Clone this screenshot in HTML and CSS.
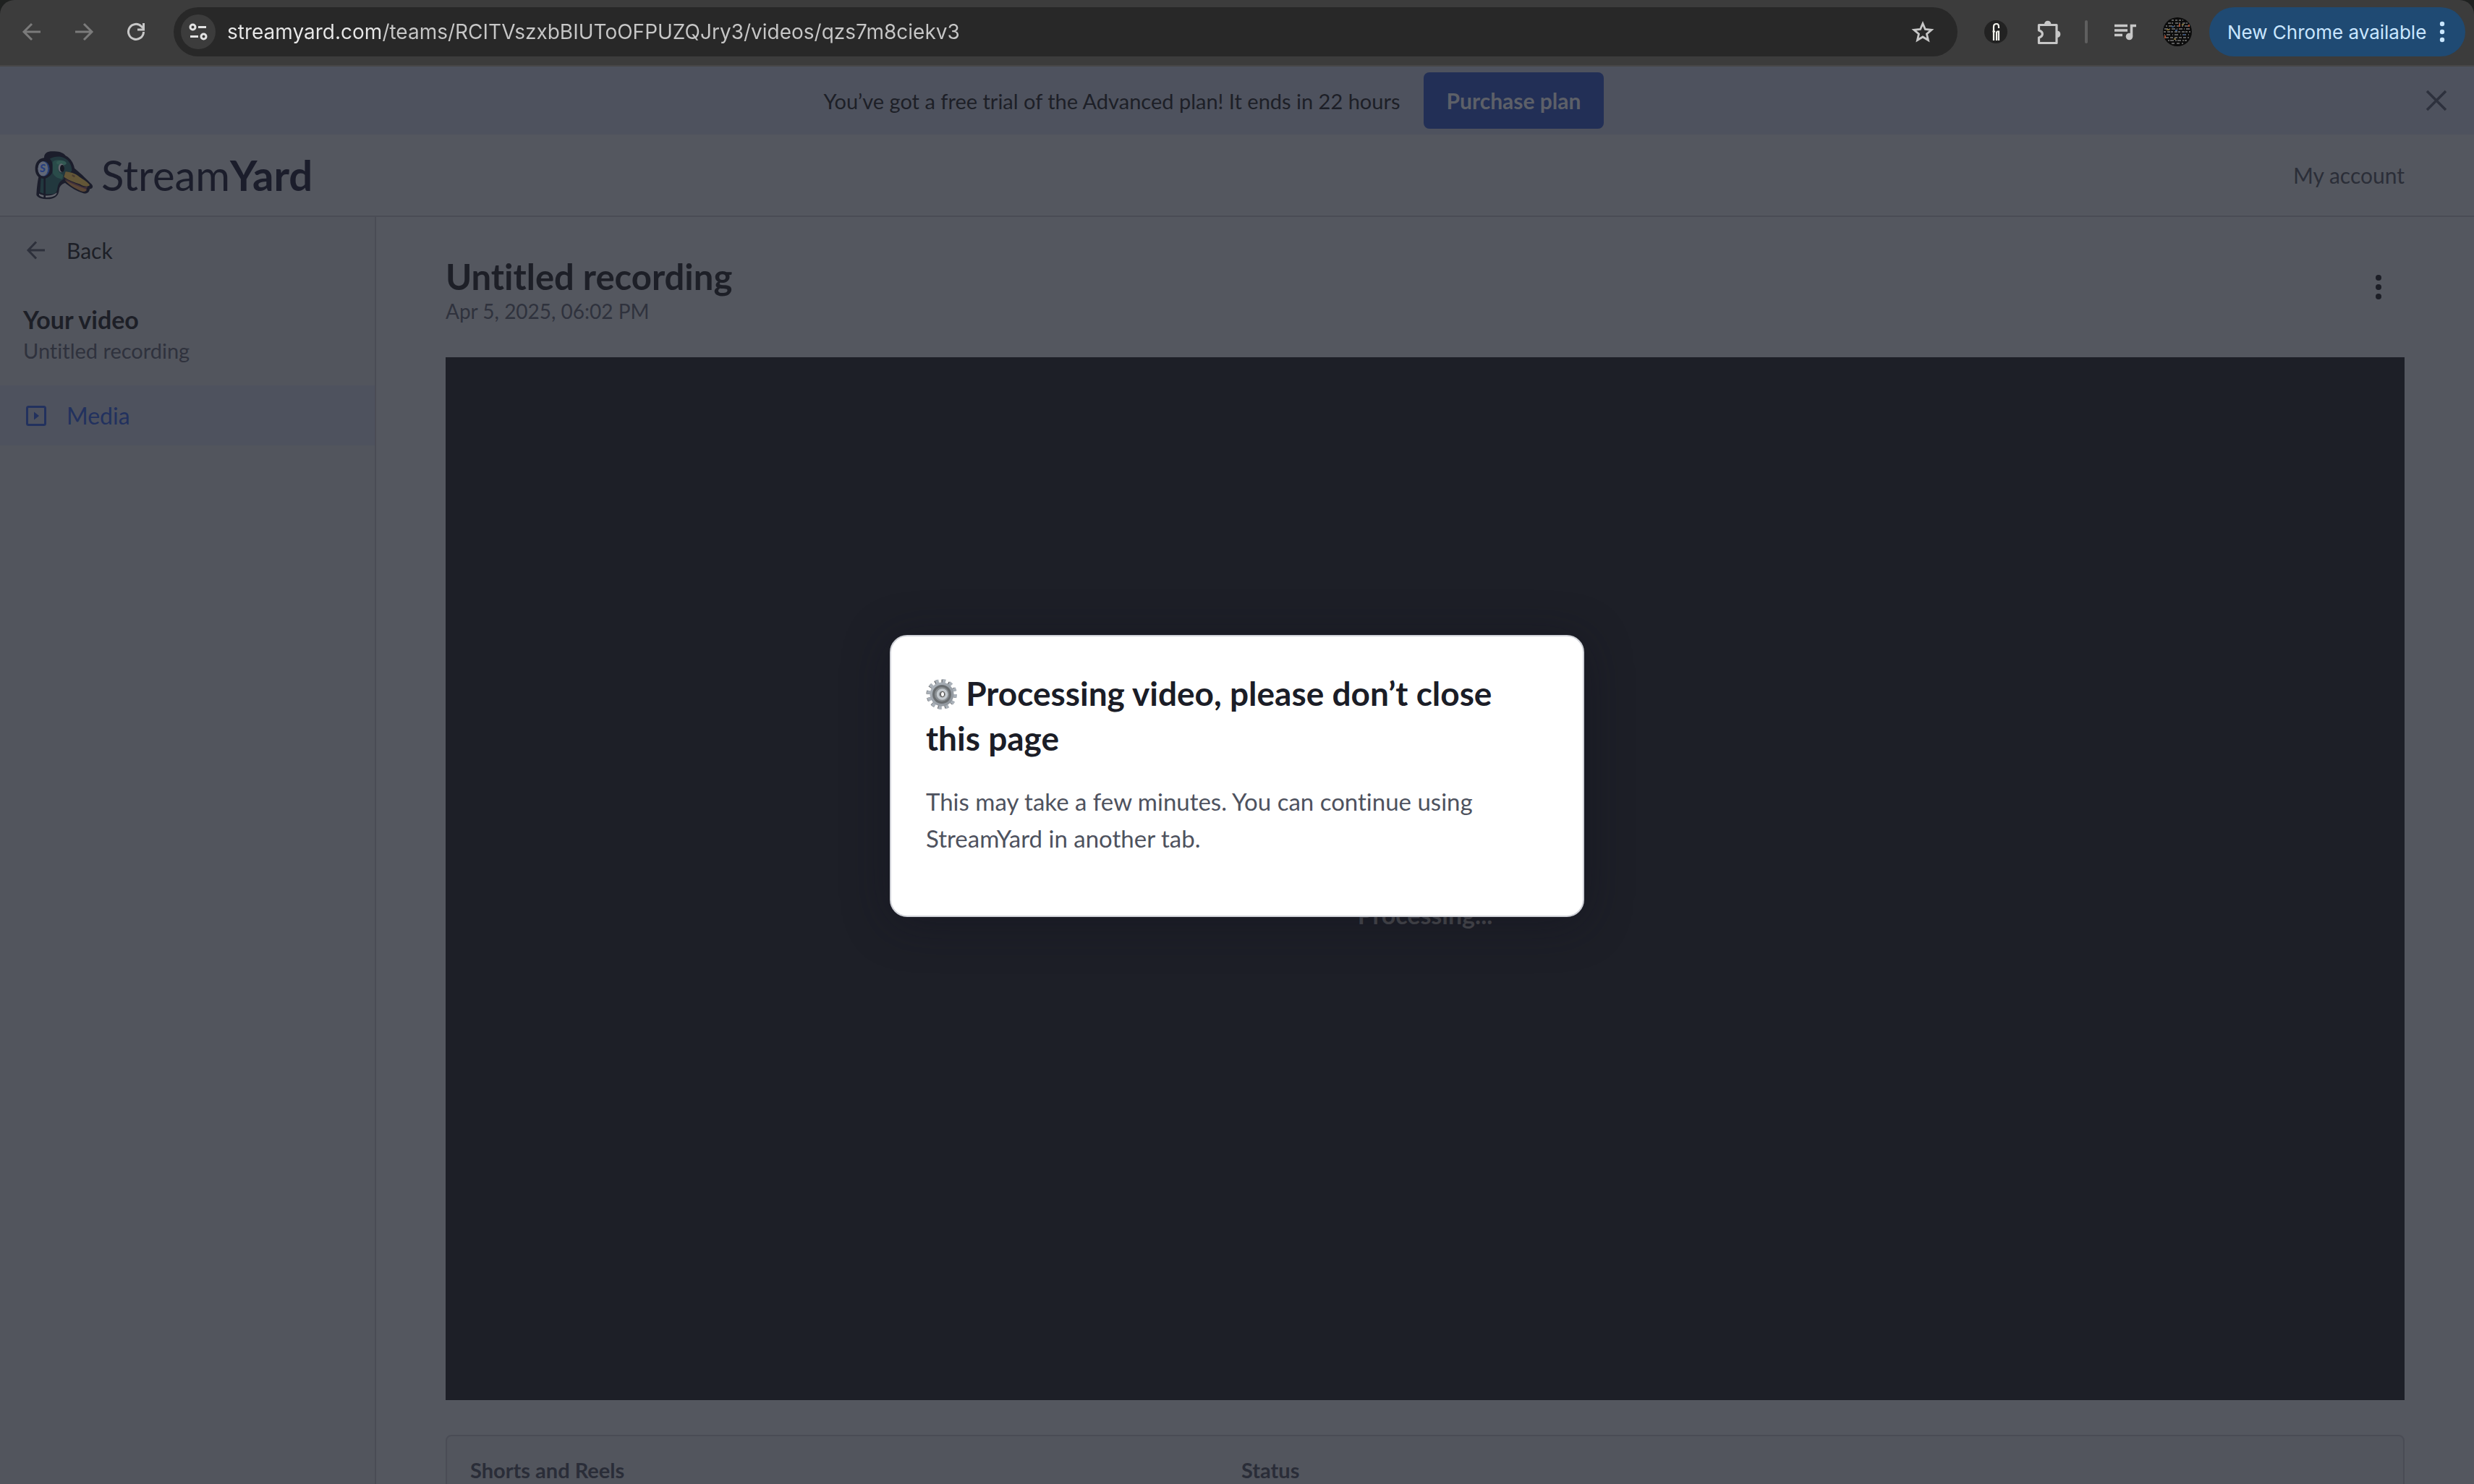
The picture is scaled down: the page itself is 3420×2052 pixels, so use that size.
FILE: index.html
```html
<!DOCTYPE html>
<html lang="en">
<head>
<meta charset="utf-8">
<title>Untitled recording - StreamYard</title>
<link rel="stylesheet" href="styles.css">
</head>
<body>
<header class="toolbar">
  <nav class="history" aria-label="Browser">
    <button class="tool dim" aria-label="Back"><svg width="32" height="32" viewBox="0 0 32 32" fill="none" stroke="currentColor" stroke-width="3"><path d="M28 16H6M16 5L5 16l11 11"/></svg></button>
    <button class="tool dim" aria-label="Forward"><svg width="32" height="32" viewBox="0 0 32 32" fill="none" stroke="currentColor" stroke-width="3"><path d="M4 16h22M16 5l11 11-11 11"/></svg></button>
    <button class="tool" aria-label="Reload"><svg width="32" height="32" viewBox="0 0 32 32" fill="none" stroke="currentColor" stroke-width="3"><path d="M26.500 16a10.500 10.500 0 1 1-3-7.500L26 11"/><path d="M26.500 4v9H18"/></svg></button>
  </nav>
  <div class="omnibox">
    <button class="site" aria-label="Site information"><svg width="28" height="28" viewBox="0 0 28 28" fill="none" stroke="currentColor" stroke-width="3"><circle cx="6.500" cy="7.500" r="3.500"/><path d="M14 7.500h11M3 20.500h11"/><circle cx="21.500" cy="20.500" r="3.500"/></svg></button>
    <input class="url" type="text" aria-label="Address" spellcheck="false" value="streamyard.com/teams/RCITVszxbBIUToOFPUZQJry3/videos/qzs7m8ciekv3">
    <button class="tool" aria-label="Bookmark"><svg width="34" height="34" viewBox="0 0 34 34" fill="none" stroke="currentColor" stroke-width="2.800"><path d="M17 5.500l3.400 8 8.700.800-6.600 5.700 2 8.500-7.500-4.500-7.500 4.500 2-8.500L4.900 14.300l8.700-.800z"/></svg></button>
  </div>
  <div class="extensions">
    <button class="tool wide" aria-label="Extension"><svg width="32" height="32" viewBox="0 0 32 32"><circle cx="16" cy="16" r="16" fill="#222"/><path d="M13 28V9q0-4 4-4 3 0 3 4v2M17.500 15.500H20V28M17 28V15.500M11.500 15.500H15" fill="none" stroke="#f2f2ec" stroke-width="2.200"/></svg></button>
    <button class="tool wide" aria-label="Extensions"><svg width="36" height="36" viewBox="2 2 36 36" fill="none" stroke="currentColor" stroke-width="3.200" stroke-linejoin="round"><path d="M5.500 10.500h24.500v25H5.500v-7.500c6.500-2 6.500-8 0-10z"/><path d="M14 9.500a3.800 4.500 0 0 1 7.500 0M31 19.500a4 3.800 0 0 1 0 7.500" fill="currentColor" stroke-width="2"/></svg></button>
    <span class="divider"></span>
    <button class="tool" aria-label="Media controls"><svg width="32" height="32" viewBox="0 0 32 32" fill="none" stroke="currentColor" stroke-width="3.500"><path d="M1 7.500h18M1 14h18M1 20.500h11M31 7.500h-6.500V22"/><circle cx="21.500" cy="22.500" r="4.800" fill="currentColor" stroke="none"/></svg></button>
    <button class="tool" aria-label="Profile"><svg width="40" height="40" viewBox="0 0 40 40"><circle cx="20" cy="20" r="20" fill="#0c0c0c"/><g fill="none" stroke="#777" stroke-width="1.500"><path d="M12 4h16" stroke-dasharray="3 2"/><path d="M7 8h27" stroke-dasharray="4 1 2 3"/><path d="M4 12h31" stroke-dasharray="2 2 5 2"/><path d="M2 16h36" stroke-dasharray="5 2 1 2"/><path d="M1 20h37" stroke-dasharray="3 2 4 1"/><path d="M2 24h36" stroke-dasharray="1 2 5 3"/><path d="M4 28h32" stroke-dasharray="4 2"/><path d="M7 32h26" stroke-dasharray="2 1 5 2"/><path d="M12 36h16" stroke-dasharray="4 3"/></g><path d="M3 25v4M23 9v4M36 10v3" stroke="#a3482c" stroke-width="2"/><path d="M5 17h4M26 10h3M15 30h3" stroke="#7b6a35" stroke-width="2"/><path d="M12 13h3M28 24h3M17 18h3" stroke="#34507a" stroke-width="2"/></svg></button>
  </div>
  <button class="update">New Chrome available<svg width="8" height="32" viewBox="0 0 8 32" fill="currentColor"><circle cx="4" cy="5" r="3.200"/><circle cx="4" cy="16" r="3.200"/><circle cx="4" cy="27" r="3.200"/></svg></button>
</header>

<div class="app">
  <div class="banner">
    <span>You’ve got a free trial of the Advanced plan! It ends in 22 hours</span>
    <button class="purchase">Purchase plan</button>
    <button class="dismiss" aria-label="Dismiss"><svg width="32" height="32" viewBox="0 0 32 32" fill="none" stroke="currentColor" stroke-width="3.500"><path d="M3 3l26 26M29 3L3 29"/></svg></button>
  </div>
  <div class="header">
    <a class="logo" href="#">
      <svg width="84" height="70" viewBox="48 48 252 210">
        <path fill="#1b1d2b" d="M93 82C92 62 108 54 130 55c26-2 46 8 52 18 23 12 33 32 37 52 18 14 46 40 66 62 14 10 12 22-3 24-2 16-14 22-28 17-26-8-52-24-74-42-14 4-24 14-25 29-2 25-18 39-54 38-26-1-40-11-40-19 1-25 4-50 9-73-14-10-18-36-10-56 7-15 20-22 33-23z"/>
        <path fill="#22383e" d="M116 86c26-14 60-14 80 12 8 10 12 24 12 36-4 10-12 10-22 6-10 8-12 18-12 30-14 6-24 20-26 38-2 18-8 22-20 24-18 2-38 0-52-8l4-58c30 0 50-12 50-40 0-20-4-32-14-40z"/>
        <path fill="#2a4c4a" d="M128 100c8-14 40-12 54 4-6 12-22 2-30 16-4 14 2 24 20 32-2 10-2 14-6 18-16-2-34-12-38-28z"/>
        <path fill="#335953" d="M144 102c2-12 34-14 42 2-6 12-20 8-28 6-6 0-12 0-14-8z"/>
        <path fill="#62656d" d="M72 230c20 12 54 12 74-4-2 14-18 20-40 20-18 0-32-6-34-10z"/>
        <path d="M95 164v84" stroke="#1b1d2b" stroke-width="8"/>
        <ellipse cx="92" cy="127" rx="29" ry="36" fill="#263c70" stroke="#1b1d2b" stroke-width="10"/>
        <ellipse cx="88" cy="127" rx="21" ry="30" fill="#606776"/>
        <text x="75" y="142" font-family="Lato, sans-serif" font-weight="900" font-style="italic" font-size="46" fill="#263f80">S</text>
        <ellipse cx="164" cy="124" rx="12" ry="18" fill="#666971"/>
        <ellipse cx="168" cy="126" rx="9" ry="15" fill="#161822"/>
        <path fill="#635637" d="M182 139c18 1 42 8 58 22 18 12 36 22 42 34-6 8-26 6-40-4-24-8-48-16-67-30z"/>
        <path fill="#41303b" d="M174 165c24 14 48 22 70 32 8 6 20 6 30 4l-8 14c-34-10-68-26-92-50z"/>
        <path fill="#5a4636" d="M178 172c20 16 60 26 92 42-4 10-14 10-26 5-26-12-48-24-66-47z"/>
        <path fill="#4b3c33" d="M210 151l12 6-4 6-10-6z"/>
      </svg>
      <span class="wordmark">Stream<b>Yard</b></span>
    </a>
    <a class="account" href="#">My account</a>
  </div>
  <div class="body">
    <aside class="sidebar">
      <a class="row back" href="#"><svg width="28" height="28" viewBox="0 0 28 28" fill="none" stroke="currentColor" stroke-width="3"><path d="M26 14H4M14 2.500L3 14l11 11.500"/></svg>Back</a>
      <h2>Your video</h2>
      <p class="subtitle">Untitled recording</p>
      <a class="row media" href="#"><svg width="28" height="28" viewBox="0 0 28 28" fill="none" stroke="currentColor" stroke-width="3"><rect x="1.500" y="1.500" width="25" height="25" rx="2"/><path d="M11 8.500v11l7-5.500z" fill="currentColor" stroke="none"/></svg>Media</a>
    </aside>
    <main class="main">
      <div class="title">
        <div>
          <h1>Untitled recording</h1>
          <p class="date">Apr 5, 2025, 06:02 PM</p>
        </div>
        <button class="kebab" aria-label="More"><svg width="8" height="34" viewBox="0 0 8 34" fill="currentColor"><circle cx="4" cy="4" r="4"/><circle cx="4" cy="17" r="4"/><circle cx="4" cy="30" r="4"/></svg></button>
      </div>
      <div class="player"><p>Processing...</p></div>
      <div class="card">
        <table>
          <thead><tr><th class="name" scope="col">Shorts and Reels</th><th scope="col">Status</th></tr></thead>
        </table>
      </div>
    </main>
  </div>
  <div class="overlay">
    <div class="modal" role="dialog" aria-modal="true" aria-labelledby="modal-title">
      <h2 id="modal-title"><svg class="gear" width="44" height="44" viewBox="0 0 44 44">
        <defs><linearGradient id="steel" x1="0" y1="0" x2="1" y2="1"><stop offset="0" stop-color="#aeb5bd"/><stop offset="1" stop-color="#8a9097"/></linearGradient></defs>
        <circle cx="21" cy="22" r="18" fill="none" stroke="#4b4b4d" stroke-width="5" stroke-dasharray="4.400 5.025"/>
        <circle cx="22" cy="22" r="18" fill="none" stroke="#aab1b9" stroke-width="6" stroke-dasharray="4.600 4.825"/>
        <circle cx="22" cy="22" r="16.500" fill="url(#steel)"/>
        <circle cx="22" cy="22" r="11.500" fill="#8b9094" stroke="#696d70" stroke-width="3"/>
        <circle cx="22.500" cy="22" r="6" fill="#777b7e" stroke="#c3c9ce" stroke-width="3.500"/>
        <ellipse cx="23" cy="22" rx="2.600" ry="3.600" fill="#fff" stroke="#55524e" stroke-width="1"/>
      </svg> Processing video, please don’t close this page</h2>
      <p>This may take a few minutes. You can continue using StreamYard in another tab.</p>
    </div>
  </div>
</div>
</body>
</html>
```
FILE: styles.css
```css
* { box-sizing: border-box; }

body {
  margin: 0;
  height: 100vh;
  display: flex;
  flex-direction: column;
  overflow: hidden;
  background: #1f2120;
  color: #1d1f27;
  font-family: Lato, "Open Sans", sans-serif;
  font-size: 29px;
  font-variant-ligatures: none;
}

h1, h2, p { margin: 0; }
a { color: inherit; text-decoration: none; }
button { margin: 0; padding: 0; border: 0; background: none; color: inherit; font: inherit; }
svg { display: block; flex: none; }

/* Browser toolbar */
.toolbar {
  flex: none;
  display: flex;
  align-items: center;
  height: 92px;
  padding: 0 12px 2px 8px;
  border-bottom: 2px solid #474747;
  border-radius: 20px 20px 0 0;
  background: #3c3c3c;
  color: #c7c7c7;
  font-family: Inter, "Liberation Sans", sans-serif;
}
.history, .extensions { display: flex; align-items: center; }
.tool { display: flex; align-items: center; justify-content: center; width: 72px; height: 68px; }
.tool.wide { width: 74px; }
.dim { color: #7b7b7b; }
.omnibox {
  flex: 1;
  display: flex;
  align-items: center;
  height: 68px;
  margin: 0 16px;
  padding: 0 12px 0 10px;
  border-radius: 34px;
  background: #282828;
}
.site {
  display: flex;
  align-items: center;
  justify-content: center;
  width: 48px;
  height: 48px;
  border-radius: 50%;
  background: #3c3c3c;
  color: #e3e3e3;
}
.url {
  flex: 1;
  min-width: 0;
  height: 48px;
  margin-left: 16px;
  padding: 0;
  border: 0;
  outline: 0;
  background: linear-gradient(90deg, #e8e8e8 214px, #c7c7c7 214px);
  background-clip: text;
  -webkit-background-clip: text;
  color: transparent;
  font: 28px Inter, "Liberation Sans", sans-serif;
}
.divider { width: 4px; height: 32px; margin: 0 16px 0 12px; border-radius: 2px; background: #5f5f5f; }
.update {
  display: flex;
  align-items: center;
  justify-content: space-between;
  width: 354px;
  height: 68px;
  margin-left: 8px;
  padding: 0 28px 0 25px;
  border-radius: 34px;
  background: #1f4a73;
  color: #c9e6ff;
  font-size: 26px;
}

/* Application */
.app {
  flex: 1;
  min-height: 0;
  position: relative;
  display: flex;
  flex-direction: column;
  overflow: hidden;
  background: #54575f;
}
.banner {
  flex: none;
  position: relative;
  display: flex;
  align-items: center;
  justify-content: center;
  gap: 32px;
  height: 94px;
  padding-right: 64px;
  background: #4e525e;
}
.purchase {
  height: 78px;
  padding: 0 32px;
  border-radius: 8px;
  background: #222f56;
  color: #5d6068;
  font-size: 30px;
  font-weight: 700;
}
.dismiss { position: absolute; right: 36px; color: #2d313d; }
.header {
  flex: none;
  display: flex;
  align-items: center;
  justify-content: space-between;
  height: 114px;
  padding: 0 96px 0 46px;
  border-bottom: 2px solid #4a4c55;
}
.logo { display: flex; align-items: center; gap: 10px; color: #1b1d2b; }
.wordmark { font-size: 58px; line-height: 72px; }
.account { font-size: 30px; color: #2b2e38; }
.body { flex: 1; min-height: 0; display: flex; }

.sidebar { flex: none; width: 520px; border-right: 2px solid #4a4c55; background: #52555d; }
.row { display: flex; align-items: center; gap: 28px; padding-left: 36px; }
.back { height: 92px; margin-bottom: 30px; font-size: 30px; }
.back svg { color: #2d303b; }
.sidebar h2 { padding-left: 32px; font-size: 34px; line-height: 40px; }
.subtitle { padding-left: 32px; margin-bottom: 26px; line-height: 45px; color: #2f323d; }
.media { height: 83px; background: #4e525e; color: #22315e; font-size: 32px; }

.main { flex: 1; min-width: 0; padding: 52px 96px 0; }
.title { display: flex; justify-content: space-between; align-items: center; margin-bottom: 46px; }
.title h1 { font-size: 49px; line-height: 60px; }
.date { font-size: 28px; line-height: 36px; color: #2f323d; }
.kebab { padding: 0 32px 6px; }
.player {
  display: flex;
  align-items: center;
  justify-content: center;
  aspect-ratio: 2708 / 1442;
  padding-top: 98px;
  background: #1d1f27;
  color: #4b4c50;
  font-size: 34px;
  font-weight: 700;
}
.card { margin-top: 48px; height: 400px; border: 2px solid #4a4c55; border-radius: 8px; background: #52555d; }
.card table { width: 100%; border-collapse: collapse; }
.card th { height: 92px; padding: 0 32px; text-align: left; font-size: 29px; color: #2a2d38; }
.card .name { width: 1066px; }

/* Dialog */
.overlay {
  position: absolute;
  inset: 0;
  display: flex;
  align-items: center;
  justify-content: center;
  padding-top: 2px;
}
.modal {
  width: 960px;
  padding: 48px 48px 81px;
  border: 2px solid #d0d2d8;
  border-radius: 24px;
  background: #fff;
  box-shadow: 0 8px 64px rgba(18, 18, 30, .45);
}
.modal h2 { margin-bottom: 31px; font-size: 46px; line-height: 62px; color: #1b1d27; }
.modal p { font-size: 33px; line-height: 51px; color: #4e525e; }
.gear { display: inline-block; vertical-align: -6px; }
```
